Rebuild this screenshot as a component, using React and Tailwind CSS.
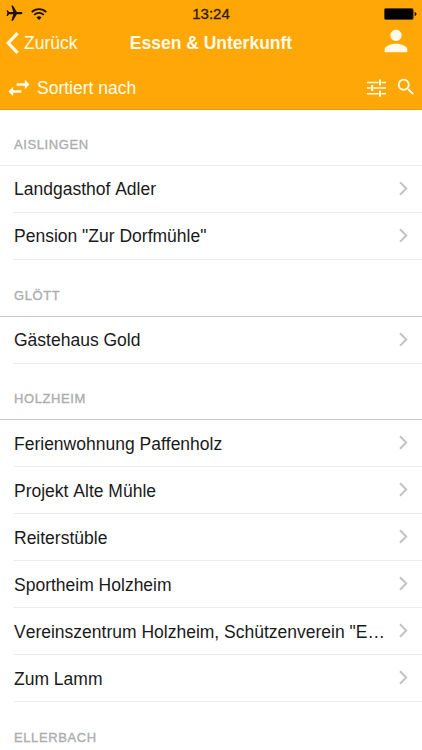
import React from 'react';
import { MdFlight, MdPerson, MdSearch, MdSwapHoriz } from 'react-icons/md';

const sections = [
    { title: 'AISLINGEN', heading: 'h-[56px] pt-[14px] border-[#ececec]', items: ['Landgasthof Adler', 'Pension "Zur Dorfmühle"'] },
    { title: 'GLÖTT', heading: 'h-[56.7px] pt-[14.6px] border-[#c8c8c8]', items: ['Gästehaus Gold'] },
    {
        title: 'HOLZHEIM',
        heading: 'h-[56.7px] pt-[14.6px] border-[#c8c8c8]',
        items: [
            'Ferienwohnung Paffenholz',
            'Projekt Alte Mühle',
            'Reiterstüble',
            'Sportheim Holzheim',
            'Vereinszentrum Holzheim, Schützenverein "E…',
            'Zum Lamm',
        ],
    },
    { title: 'ELLERBACH', heading: 'h-[56.7px] pt-[15px] border-[#c8c8c8]', items: [] },
];

const WifiIcon = () => (
    <svg width="16" height="12" viewBox="0 0 16 12" fill="none" stroke="#1c1200" strokeWidth="1.7">
        <path d="M0.7 4.2a10.4 10.4 0 0 1 14.6 0" />
        <path d="M3.2 6.9a6.8 6.8 0 0 1 9.6 0" />
        <path d="M8 12 5.5 9.4a3.6 3.6 0 0 1 5 0Z" fill="#1c1200" stroke="none" />
    </svg>
);

const BatteryIcon = () => (
    <svg width="33" height="12" viewBox="0 0 33 12">
        <rect x="0.4" y="0.4" width="28.8" height="11.2" rx="1.6" fill="#000" stroke="#5f3e00" strokeWidth="0.8" />
        <path d="M30.6 4v4c1.2-.3 1.9-1 1.9-2s-.7-1.7-1.9-2z" fill="#1c1200" />
    </svg>
);

const BackIcon = () => (
    <svg width="13" height="22" viewBox="0 0 13 22" fill="none" stroke="currentColor" strokeWidth="3.2">
        <path d="M11.5 1.2 2.3 11l9.2 9.8" />
    </svg>
);

const FilterIcon = () => (
    <svg width="19" height="18" viewBox="0 0 19 18" fill="none" stroke="currentColor">
        <path d="M0 3.4h11.5M14.5 3.4H19M0 9.1h3.8M6.5 9.1H19M0 14.8h11.5M14.5 14.8H19" strokeWidth="1.5" />
        <path d="M13 0.4v6M5.2 6.1v6M13 11.8v6" strokeWidth="2" />
    </svg>
);

const ChevronIcon = () => (
    <svg className="shrink-0" width="9" height="15" viewBox="0 0 9 15" fill="none" stroke="#c3c3c6" strokeWidth="2">
        <path d="M1 1.3 7.2 7.5 1 13.7" />
    </svg>
);

const Header = () => (
    <header className="h-[110px] bg-[#ffa706] border-b border-[#e39a1c] text-[#fffbe8]">
        <div className="h-[27px] grid grid-cols-3 items-center pl-[5px] pr-[5px]">
            <div className="flex items-center gap-[7px]">
                <MdFlight className="rotate-90 text-[#1c1200]" size={19} />
                <WifiIcon />
            </div>
            <span className="text-center text-[15px] leading-[27px] text-[#2b1c00] [-webkit-text-stroke:0.3px_#2b1c00]">13:24</span>
            <div className="flex justify-end">
                <BatteryIcon />
            </div>
        </div>
        <div className="h-[31px] grid grid-cols-[120px_1fr_120px] items-center pl-[6px] pr-[9px]">
            <div className="flex items-center gap-[5px]">
                <BackIcon />
                <span className="text-[17.5px] leading-[26px]">Zurück</span>
            </div>
            <h1 className="pl-[3px] text-center text-[17.5px] leading-[26px] font-bold whitespace-nowrap">Essen &amp; Unterkunft</h1>
            <div className="-mt-[4px] flex justify-end">
                <MdPerson size={34} />
            </div>
        </div>
        <div className="h-[51px] pt-[9px] flex items-center pl-[5px] pr-[5px]">
            <MdSwapHoriz size={28} />
            <span className="ml-[4px] flex-1 text-[17.5px]">Sortiert nach</span>
            <FilterIcon />
            <MdSearch className="ml-[9px] mb-[2px]" size={22} />
        </div>
    </header>
);

const Row = ({ label }) => (
    <li className="h-[47px] ml-[14px] pr-[14px] pb-[1px] border-b border-[#ececec] flex items-center justify-between">
        <span className="pt-[2px] whitespace-nowrap text-[17.5px] text-[#1a1a1a] [font-kerning:none]">{label}</span>
        <ChevronIcon />
    </li>
);

const App = () => (
    <div className="w-[422px] h-[750px] overflow-hidden bg-white font-['Liberation_Sans',Arial,sans-serif]">
        <Header />
        <main>
            {sections.map((section) => (
                <section key={section.title}>
                    <h2 className={`pl-[14px] border-b text-[13px] leading-[42px] tracking-[0.6px] text-[#adadad] [-webkit-text-stroke:0.35px_#adadad] ${section.heading}`}>
                        {section.title}
                    </h2>
                    <ul>
                        {section.items.map((item) => (
                            <Row key={item} label={item} />
                        ))}
                    </ul>
                </section>
            ))}
        </main>
    </div>
);

export default App;
